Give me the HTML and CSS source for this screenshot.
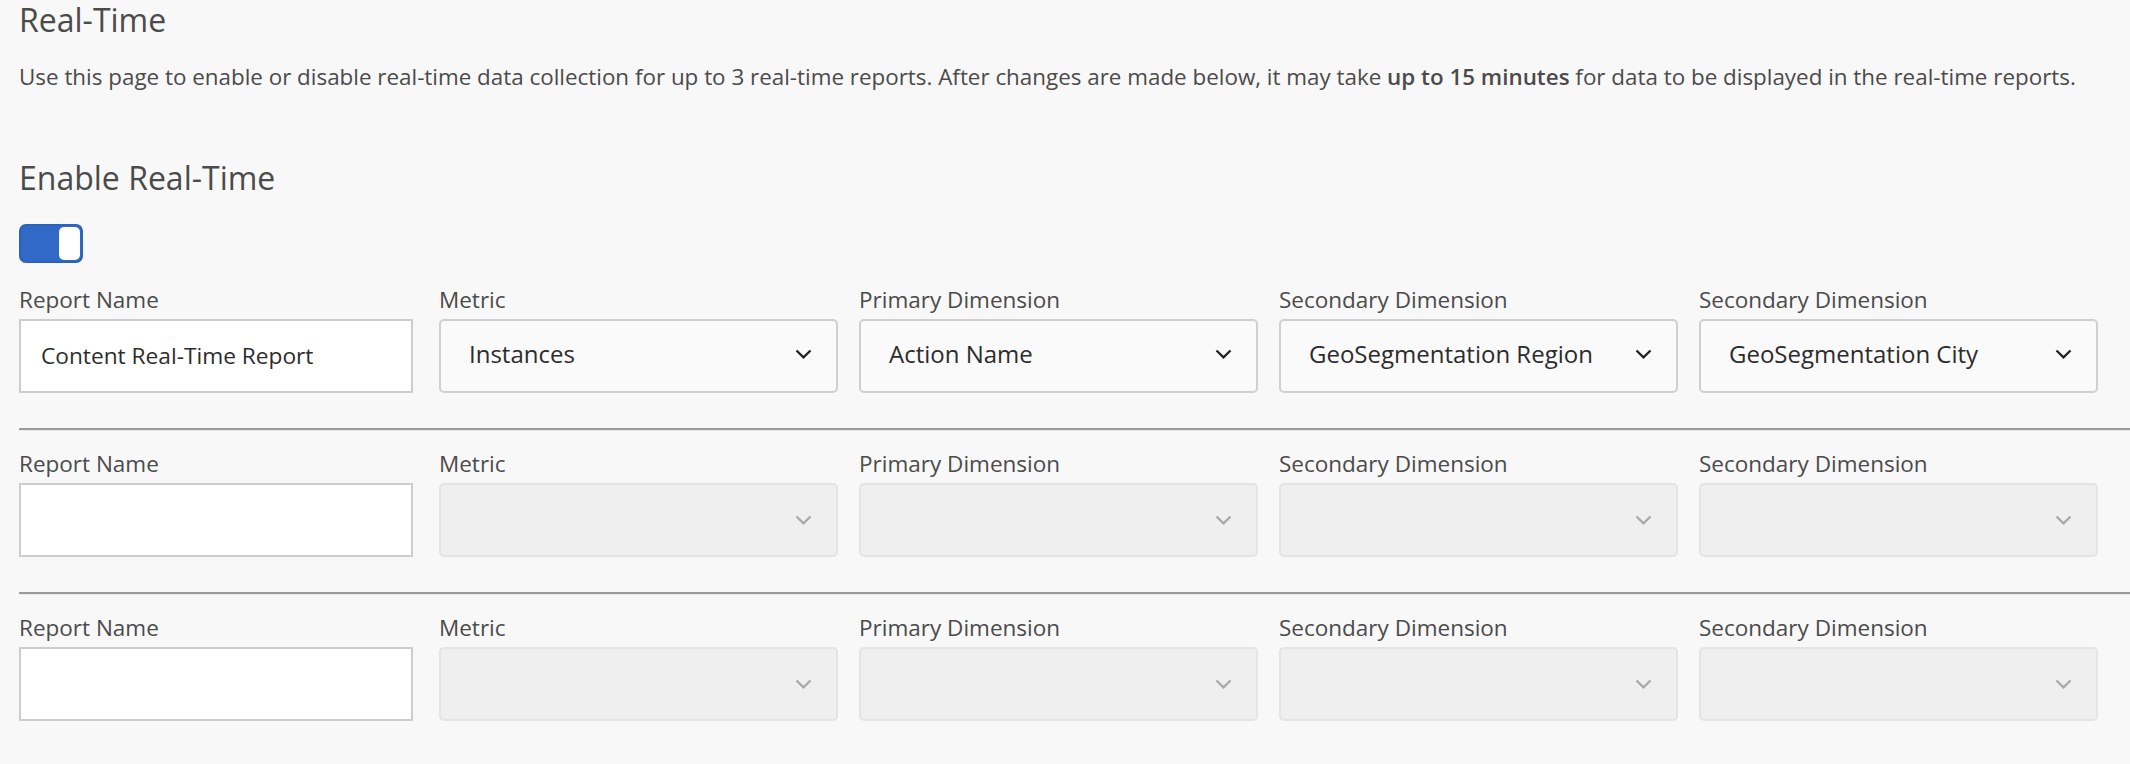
FILE: index.html
```html
<!DOCTYPE html>
<html lang="en">
<head>
  <meta charset="UTF-8">
  <meta name="viewport" content="width=device-width, initial-scale=1.0">
  <title>Real-Time</title>
  <link rel="stylesheet" href="styles.css">
</head>
<body>
  <h1 class="page-title">Real-Time</h1>
  <p class="intro">Use this page to enable or disable real-time data collection for up to 3 real-time reports. After changes are made below, it may take <strong>up to 15 minutes</strong> for data to be displayed in the real-time reports.</p>

  <h2 class="section-title">Enable Real-Time</h2>
  <div class="toggle on"><span class="knob"></span></div>

  <div class="report-row first">
    <div class="field">
      <label>Report Name</label>
      <input class="text-input" type="text" value="Content Real-Time Report">
    </div>
    <div class="field">
      <label>Metric</label>
      <div class="select"><span>Instances</span><svg class="chevron" width="17" height="10" viewBox="0 0 17 10"><path d="M1.5 1.5 L8.5 8.3 L15.5 1.5"/></svg></div>
    </div>
    <div class="field">
      <label>Primary Dimension</label>
      <div class="select"><span>Action Name</span><svg class="chevron" width="17" height="10" viewBox="0 0 17 10"><path d="M1.5 1.5 L8.5 8.3 L15.5 1.5"/></svg></div>
    </div>
    <div class="field">
      <label>Secondary Dimension</label>
      <div class="select"><span>GeoSegmentation Region</span><svg class="chevron" width="17" height="10" viewBox="0 0 17 10"><path d="M1.5 1.5 L8.5 8.3 L15.5 1.5"/></svg></div>
    </div>
    <div class="field">
      <label>Secondary Dimension</label>
      <div class="select"><span>GeoSegmentation City</span><svg class="chevron" width="17" height="10" viewBox="0 0 17 10"><path d="M1.5 1.5 L8.5 8.3 L15.5 1.5"/></svg></div>
    </div>
  </div>

  <div class="report-row">
    <div class="field">
      <label>Report Name</label>
      <input class="text-input" type="text" value="">
    </div>
    <div class="field">
      <label>Metric</label>
      <div class="select disabled"><span></span><svg class="chevron" width="17" height="10" viewBox="0 0 17 10"><path d="M1.5 1.5 L8.5 8.3 L15.5 1.5"/></svg></div>
    </div>
    <div class="field">
      <label>Primary Dimension</label>
      <div class="select disabled"><span></span><svg class="chevron" width="17" height="10" viewBox="0 0 17 10"><path d="M1.5 1.5 L8.5 8.3 L15.5 1.5"/></svg></div>
    </div>
    <div class="field">
      <label>Secondary Dimension</label>
      <div class="select disabled"><span></span><svg class="chevron" width="17" height="10" viewBox="0 0 17 10"><path d="M1.5 1.5 L8.5 8.3 L15.5 1.5"/></svg></div>
    </div>
    <div class="field">
      <label>Secondary Dimension</label>
      <div class="select disabled"><span></span><svg class="chevron" width="17" height="10" viewBox="0 0 17 10"><path d="M1.5 1.5 L8.5 8.3 L15.5 1.5"/></svg></div>
    </div>
  </div>

  <div class="report-row last">
    <div class="field">
      <label>Report Name</label>
      <input class="text-input" type="text" value="">
    </div>
    <div class="field">
      <label>Metric</label>
      <div class="select disabled"><span></span><svg class="chevron" width="17" height="10" viewBox="0 0 17 10"><path d="M1.5 1.5 L8.5 8.3 L15.5 1.5"/></svg></div>
    </div>
    <div class="field">
      <label>Primary Dimension</label>
      <div class="select disabled"><span></span><svg class="chevron" width="17" height="10" viewBox="0 0 17 10"><path d="M1.5 1.5 L8.5 8.3 L15.5 1.5"/></svg></div>
    </div>
    <div class="field">
      <label>Secondary Dimension</label>
      <div class="select disabled"><span></span><svg class="chevron" width="17" height="10" viewBox="0 0 17 10"><path d="M1.5 1.5 L8.5 8.3 L15.5 1.5"/></svg></div>
    </div>
    <div class="field">
      <label>Secondary Dimension</label>
      <div class="select disabled"><span></span><svg class="chevron" width="17" height="10" viewBox="0 0 17 10"><path d="M1.5 1.5 L8.5 8.3 L15.5 1.5"/></svg></div>
    </div>
  </div>
</body>
</html>
```

FILE: styles.css
```css
body {
  font-family: "Open Sans", Arial, sans-serif;
  background-color: #f8f8f8;
  color: #4b4b4b;
  margin: 0;
  padding: 0 0 0 19px;
}
.page-title {
  font-size: 32px;
  font-weight: normal;
  line-height: 40px;
  margin: 0;
}
.intro {
  font-size: 22.4px;
  line-height: 30px;
  margin: 22px 0 0 0;
}
.intro strong {
  font-weight: 600;
}
.section-title {
  font-size: 32px;
  font-weight: normal;
  line-height: 42px;
  margin: 65px 0 0 0;
}
.toggle {
  width: 64px;
  height: 39px;
  box-sizing: border-box;
  border: 2px solid #2b62bb;
  border-radius: 7px;
  background-color: #3169c6;
  margin-top: 25px;
  display: flex;
  justify-content: flex-end;
  padding: 1px;
}
.knob {
  width: 21px;
  background-color: white;
  border-radius: 5px;
}
.report-row {
  display: grid;
  grid-template-columns: repeat(5, 399px);
  column-gap: 21px;
  padding: 19.5px 0 35.5px 0;
  border-bottom: 2px solid #9b9b9b;
  box-shadow: 0 1px 0 #e9e9e9;
}
.report-row.first {
  padding-top: 22.5px;
}
.report-row.last {
  border-bottom: none;
  box-shadow: none;
}
.field label {
  display: block;
  font-size: 22.5px;
  line-height: 28px;
  margin-bottom: 5px;
}
.text-input {
  width: 394px;
  height: 74px;
  box-sizing: border-box;
  border: 2px solid #cccccc;
  background-color: white;
  padding: 0 20px;
  font-family: inherit;
  font-size: 22.7px;
  color: #2c2c2c;
  outline: none;
  margin: 0;
}
.select {
  height: 74px;
  box-sizing: border-box;
  border: 2px solid #cfcfcf;
  border-radius: 5px;
  background-color: #fafafa;
  display: flex;
  align-items: center;
  justify-content: space-between;
  padding: 0 24px 4px 28px;
  font-size: 24px;
  color: #2c2c2c;
}
.chevron {
  fill: none;
  stroke: #222222;
  stroke-width: 2.3;
}
.select.disabled {
  background-color: #efefef;
  border-color: #e4e4e4;
}
.select.disabled .chevron {
  stroke: #a8a8a8;
  margin-top: 4px;
}
```
